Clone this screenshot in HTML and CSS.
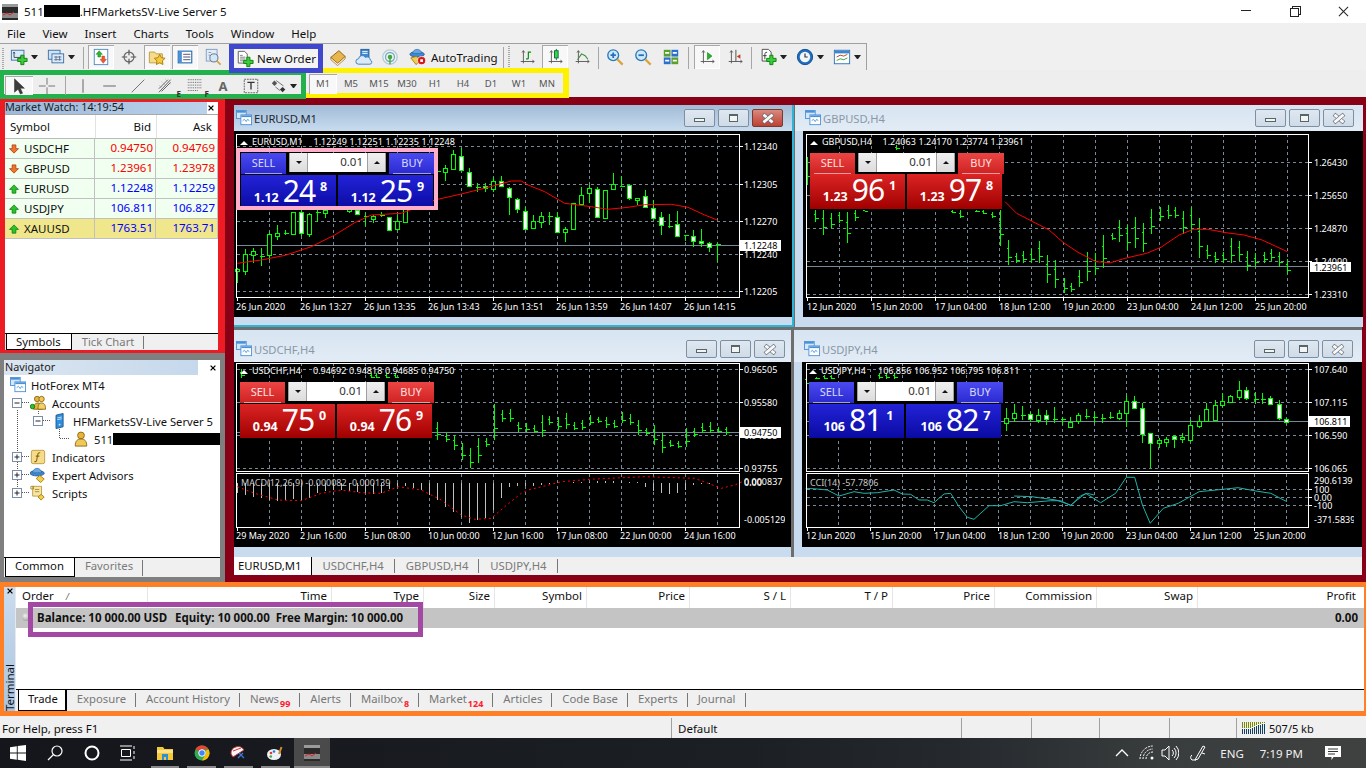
FILE: index.html
```html
<!DOCTYPE html>
<html lang="en">
<head>
<meta charset="utf-8">
<title>MetaTrader 4</title>
<link rel="stylesheet" href="styles.css">
</head>
<body>
<svg class="sprite" aria-hidden="true">
<defs>
<path id="plus" d="M12 8h3.500v3.500H19V15h-3.500v3.500H12V15H8.500v-3.500H12z" fill="#3ccb3c" stroke="#0b7f0b"/>
<path id="axes" d="M6 3v14M3 15h15M6 3L4.500 5M6 3l1.500 2M18 15l-2-1.500M18 15l-2 1.500" fill="none" stroke="#555"/>
</defs>
<symbol id="i-newchart" viewBox="0 0 20 20"><rect x="1.500" y="2.500" width="14" height="11" fill="#d8ebfb" stroke="#3a6ea5"/><path d="M4.500 4.500v6h8M4.500 4.500l-1 1.500M4.500 4.500l1 1.500M12.500 10.500l-1.500-1M12.500 10.500l-1.500 1" fill="none" stroke="#444"/><use href="#plus"/></symbol>
<symbol id="i-profiles" viewBox="0 0 20 20"><rect x="1.500" y="2.500" width="13" height="10" fill="#cfe3f7" stroke="#3a6ea5"/><rect x="5.500" y="6.500" width="13" height="10" fill="#dcebfa" stroke="#3a6ea5"/><path d="M8 10h8M8 13h8M10 9v5M14 9v5" fill="none" stroke="#5a6f8a"/></symbol>
<symbol id="i-mw" viewBox="0 0 20 20"><rect x="2.500" y="1.500" width="15" height="17" fill="#fff" stroke="#4a86c0"/><path d="M8 3l3.500 4H9.500v3h-3V7H4.500z" fill="#2db52d" stroke="#0a7a0a" stroke-width=".5"/><path d="M11 9h3v3.500h2L12.500 17 9 12.500h2z" fill="#ef5a28" stroke="#a33" stroke-width=".5"/></symbol>
<symbol id="i-cross" viewBox="0 0 20 20"><circle cx="10" cy="10" r="5.500" fill="none" stroke="#666" stroke-width="1.300"/><path d="M10 2v6M10 12v6M2 10h6M12 10h6" stroke="#555" stroke-width="1.300"/></symbol>
<symbol id="i-nav" viewBox="0 0 20 20"><path d="M1.500 4.500h6l1.500 2h7v10h-14.500z" fill="#f6dc8a" stroke="#b89b3a"/><path d="M13 7l1.900 3.800 4.100.6-3 2.900.7 4.100-3.700-2-3.700 2 .7-4.100-3-2.900 4.100-.6z" fill="#f6c93a" stroke="#a87a10"/></symbol>
<symbol id="i-term" viewBox="0 0 20 20"><rect x="2.500" y="3.500" width="15" height="13" fill="#fff" stroke="#2a6fb5" stroke-width="1.300"/><rect x="3" y="4" width="3.500" height="12" fill="#4a90d9"/><path d="M8 7h8M8 10h8M8 13h8" stroke="#446"/></symbol>
<symbol id="i-tester" viewBox="0 0 20 20"><rect x="2.500" y="1.500" width="12" height="13" fill="#e3ecf5" stroke="#7a9cc0"/><circle cx="11" cy="11" r="4.500" fill="#cfe8fa" stroke="#667"/><path d="M14.500 14.500l4 4" stroke="#d9a33a" stroke-width="2"/><path d="M5 5h3M5 8h2" stroke="#7a9cc0"/></symbol>
<symbol id="i-order" viewBox="0 0 20 20"><path d="M2.500 1.500h7l3 3v10h-10z" fill="#fff" stroke="#555"/><path d="M4.500 6h3M4.500 8h6M4.500 10h6M4.500 12h4" stroke="#777"/><use href="#plus"/></symbol>
<symbol id="i-book" viewBox="0 0 20 20"><path d="M2 10.500L11 3l7 6.500-8.500 7.500z" fill="#e8b64a" stroke="#8a5a10"/><path d="M2 10.500v2.500l7.500 6.500L18 12V9.500L9.500 17z" fill="#fbf0d0" stroke="#8a5a10" stroke-width=".7"/></symbol>
<symbol id="i-cloud" viewBox="0 0 20 20"><rect x="6.500" y="1.500" width="9" height="10" fill="#3f88d4" stroke="#225d99"/><path d="M8 4h6M8 6h6" stroke="#fff"/><path d="M4 18a3 3 0 0 1 0-6 4 4 0 0 1 7.500-1.500A3.500 3.500 0 0 1 17 13.500 2.300 2.300 0 0 1 16.500 18z" fill="#dbeaf8" stroke="#3a78b8"/></symbol>
<symbol id="i-signal" viewBox="0 0 20 20"><circle cx="10" cy="10" r="8" fill="#eef4f6" stroke="#b5cbd8" stroke-width="1.500"/><circle cx="10" cy="10" r="5" fill="none" stroke="#7fa8b8" stroke-width="1.500"/><circle cx="10" cy="10" r="2.500" fill="#3aa83a"/><path d="M10 10v8" stroke="#3aa83a" stroke-width="1.500"/></symbol>
<symbol id="i-auto" viewBox="0 0 20 20"><ellipse cx="9" cy="7" rx="8" ry="3" fill="#3f88d4" stroke="#225d99"/><path d="M4 6a5 4.500 0 0 1 10 0z" fill="#6aa7e0" stroke="#225d99" stroke-width=".6"/><path d="M2 11l6-1.500 5 3-5 6z" fill="#f2cf4a" stroke="#a87a10"/><circle cx="14" cy="14" r="4.500" fill="#d81818" stroke="#fff" stroke-width=".8"/><rect x="12.500" y="12.500" width="3" height="3" fill="#fff"/></symbol>
<symbol id="i-bar" viewBox="0 0 20 20"><use href="#axes"/><path d="M11.500 4v8M11.500 4.500h3M11.500 12H9" fill="none" stroke="#0a8a0a" stroke-width="1.300"/></symbol>
<symbol id="i-candle" viewBox="0 0 20 20"><use href="#axes"/><path d="M11.500 1v2M11.500 11v2.500" stroke="#064"/><rect x="9.500" y="3" width="4" height="8" fill="#3fd43f" stroke="#064"/></symbol>
<symbol id="i-line" viewBox="0 0 20 20"><use href="#axes"/><path d="M5 13l4.500-6.500 4 2 3 4" fill="none" stroke="#3a8a3a" stroke-width="1.200"/></symbol>
<symbol id="i-zoomin" viewBox="0 0 20 20"><circle cx="8" cy="8" r="6" fill="#cfe8fa" stroke="#2a7ab8" stroke-width="1.500"/><path d="M5 8h6M8 5v6" stroke="#2a6fb5" stroke-width="2"/><path d="M12.500 12.500l6 6" stroke="#d9a33a" stroke-width="2.500"/></symbol>
<symbol id="i-zoomout" viewBox="0 0 20 20"><circle cx="8" cy="8" r="6" fill="#cfe8fa" stroke="#2a7ab8" stroke-width="1.500"/><path d="M5 8h6" stroke="#2a6fb5" stroke-width="2"/><path d="M12.500 12.500l6 6" stroke="#d9a33a" stroke-width="2.500"/></symbol>
<symbol id="i-tile" viewBox="0 0 20 20"><rect x="2" y="2" width="7.500" height="7.500" fill="#5aa02c"/><rect x="10.500" y="2" width="7.500" height="7.500" fill="#2a6fd0"/><rect x="2" y="10.500" width="7.500" height="7.500" fill="#2a6fd0"/><rect x="10.500" y="10.500" width="7.500" height="7.500" fill="#5aa02c"/><path d="M3.500 5.500h4.500M12 5.500h4.500M3.500 14h4.500M12 14h4.500" stroke="#fff" stroke-width="2"/></symbol>
<symbol id="i-ascroll" viewBox="0 0 20 20"><use href="#axes"/><path d="M10.500 5l5 4-5 4z" fill="#2cb02c" stroke="#0a7a0a" stroke-width=".6"/></symbol>
<symbol id="i-shift" viewBox="0 0 20 20"><use href="#axes"/><path d="M11 2v13" stroke="#444"/><path d="M16 7l-4 2.500 4 2.500z" fill="#c83a1a"/></symbol>
<symbol id="i-ind" viewBox="0 0 20 20"><path d="M3.500 1.500h7l3 3v10h-10z" fill="#fff" stroke="#444"/><path d="M9 5c-2-1-2.500 1-2.500 2.500v5M4.500 8.500h4" fill="none" stroke="#333"/><use href="#plus"/></symbol>
<symbol id="i-clock" viewBox="0 0 20 20"><circle cx="10" cy="10" r="8.500" fill="#1f6fc0" stroke="#0d4a8c"/><circle cx="10" cy="10" r="5.800" fill="#f2f6fa"/><path d="M10 6v4h3" fill="none" stroke="#333" stroke-width="1.300"/></symbol>
<symbol id="i-tpl" viewBox="0 0 20 20"><rect x="1.500" y="2.500" width="17" height="15" fill="#fff" stroke="#2a6fb5"/><rect x="2" y="3" width="16" height="3" fill="#3a86d0"/><path d="M4 10l4-2 4 1 4-2" fill="none" stroke="#b0361a"/><path d="M4 14l4-2 4 1 4-2" fill="none" stroke="#2a9a2a"/></symbol>
<symbol id="i-cursor" viewBox="0 0 20 20"><path d="M5 2v15l4-3.500 2.500 5.500 2.500-1-2.500-5.500H16z" fill="#3c3c3c" stroke="#222" stroke-width=".5"/></symbol>
<symbol id="i-xhair" viewBox="0 0 20 20"><path d="M10 1v7.500M10 11.500V19M1 10h7.500M11.500 10H19" stroke="#666"/></symbol>
<symbol id="i-v" viewBox="0 0 20 20"><path d="M10 2.500v15" stroke="#555"/></symbol>
<symbol id="i-h" viewBox="0 0 20 20"><path d="M2.500 10h14" stroke="#555"/></symbol>
<symbol id="i-trend" viewBox="0 0 20 20"><path d="M3 17L17 3" stroke="#666"/></symbol>
<symbol id="i-chan" viewBox="0 0 20 20"><path d="M1 13L11 3M4 16L14 6M1 17L14 3" stroke="#555" fill="none"/><path d="M4 5l5 5M8 2l6 6M1 9l5 5" stroke="#888" stroke-width=".6" stroke-dasharray="1 1"/></symbol>
<symbol id="i-fibo" viewBox="0 0 20 20"><path d="M2 3h15M2 6h15M2 9h15M2 12h15M2 15h11" stroke="#555" stroke-dasharray="1 1"/></symbol>
<symbol id="i-tbox" viewBox="0 0 20 20"><rect x="2.500" y="2.500" width="15" height="15" fill="none" stroke="#555" stroke-dasharray="2 1"/><path d="M6 6h8M10 6v8" stroke="#333" stroke-width="1.500"/></symbol>
<symbol id="i-shapes" viewBox="0 0 20 20"><path d="M2 7l3-3 3 3-3 3z" fill="#555"/><path d="M11 14l3-3 3 3-3 3z" fill="#333"/><path d="M7 4l8 6M6 11l5 4" stroke="#666"/></symbol>
<symbol id="i-up" viewBox="0 0 16 16"><path d="M8 2.500l6 6h-3.500v5h-5v-5H2z" fill="#2cc02c" stroke="#0a7a0a"/></symbol>
<symbol id="i-down" viewBox="0 0 16 16"><path d="M5.500 2.500h5v5H14l-6 6-6-6h3.500z" fill="#f0742a" stroke="#a83a0a"/></symbol>
<symbol id="i-win" viewBox="0 0 18 18"><rect x=".5" y=".5" width="11" height="9" fill="#d5e6f7" stroke="#4a90d9"/><rect x="1" y="1" width="10" height="2" fill="#4a90d9"/><rect x="5.500" y="5.500" width="12" height="11" fill="#fff" stroke="#4a90d9"/><rect x="6" y="6" width="11" height="2" fill="#4a90d9"/><path d="M7.500 12l2-1.500 2 2.500 1.500-2.500 2 1.500" fill="none" stroke="#4a90d9"/></symbol>
<symbol id="i-accounts" viewBox="0 0 18 18"><circle cx="8" cy="4.500" r="3" fill="#e6b53c" stroke="#8a6410"/><circle cx="13" cy="4.500" r="3" fill="#f0c85a" stroke="#8a6410"/><path d="M4 16c0-5 2-7 5-7s5 2 5 7z" fill="#e6b53c" stroke="#8a6410"/><path d="M9 16c0-5 1-7 4-7s4.500 2 4.500 7z" fill="#f3cf6a" stroke="#8a6410"/><circle cx="2.800" cy="13" r="2.500" fill="#30c030" stroke="#0a7a0a"/></symbol>
<symbol id="i-server" viewBox="0 0 18 18"><path d="M4.500 2.500l8-2v15l-8 2z" fill="#2f8fdc" stroke="#17568c"/><path d="M6 5.500l5-1M6 7.500l5-1" stroke="#cfe8fa"/><circle cx="8.500" cy="13" r="1" fill="#cfe8fa"/></symbol>
<symbol id="i-user" viewBox="0 0 18 18"><circle cx="9" cy="5" r="3.800" fill="#e6b53c" stroke="#8a6410"/><path d="M2.500 17c0-6 2.500-8 6.500-8s6.500 2 6.500 8z" fill="#f0c85a" stroke="#8a6410"/></symbol>
<symbol id="i-func" viewBox="0 0 18 18"><rect x="1.500" y="1.500" width="15" height="15" rx="2" fill="#f6dc8a" stroke="#b89b3a"/><path d="M11.500 4.500c-2-.7-2.500.5-2.800 2l-1.200 6c-.3 1.500-1 2-2.500 1.500M6.500 8h4" fill="none" stroke="#8a6410" stroke-width="1.200"/></symbol>
<symbol id="i-ea" viewBox="0 0 18 18"><ellipse cx="8" cy="7" rx="8" ry="3" fill="#3f88d4" stroke="#225d99"/><path d="M3 6.500a5 5 0 0 1 10 0z" fill="#6aa7e0" stroke="#225d99" stroke-width=".6"/><path d="M7 13l4-3.500 5 4-4 4z" fill="#f2cf4a" stroke="#a87a10"/></symbol>
<symbol id="i-script" viewBox="0 0 18 18"><path d="M3 1.500h10v11H3z" fill="#f6e7a8" stroke="#b89b3a"/><path d="M1 1.500h3v3H1zM5.500 5h5M5.500 7.500h5" fill="none" stroke="#a88a2a"/><path d="M9 13.500l3.500-3 3.500 3-3.500 3.500z" fill="#f2cf4a" stroke="#a87a10"/></symbol>
<symbol id="i-exm" viewBox="0 0 10 10"><rect x=".5" y=".5" width="9" height="9" fill="#fff" stroke="#7a8ea8"/><path d="M2.500 5h5" stroke="#223"/></symbol>
<symbol id="i-exp" viewBox="0 0 10 10"><rect x=".5" y=".5" width="9" height="9" fill="#fff" stroke="#7a8ea8"/><path d="M2.500 5h5M5 2.500v5" stroke="#223"/></symbol>
<symbol id="i-tcross" viewBox="0 0 10 10"><path d="M2 2l6 6M8 2L2 8" stroke="#000" stroke-width="1.600"/></symbol>
<symbol id="i-winlogo" viewBox="0 0 16 16"><path d="M0 2.200l6.800-1v6.400H0zM7.700 1.100L16 0v7.600H7.700zM0 8.400h6.800v6.400l-6.800-1zM7.700 8.400H16V16l-8.300-1.200z" fill="#fff"/></symbol>
<symbol id="i-search" viewBox="0 0 16 16"><circle cx="10" cy="6" r="5" fill="none" stroke="#fff" stroke-width="1.200"/><path d="M6.500 9.500L1 15" stroke="#fff" stroke-width="1.300"/></symbol>
<symbol id="i-ring" viewBox="0 0 16 16"><circle cx="8" cy="8" r="6.500" fill="none" stroke="#fff" stroke-width="2"/></symbol>
<symbol id="i-tasks" viewBox="0 0 16 16"><path d="M0 1h12M0 15h12M1.500 4.500h9v7h-9zM14 1v3M14 6v3M14 11v3" fill="none" stroke="#fff"/></symbol>
<symbol id="i-explorer" viewBox="0 0 16 16"><path d="M0 2h6l1.500 2H16v11H0z" fill="#f6c93a"/><path d="M0 5h16v3H0z" fill="#fbe38a"/><path d="M5 9h6v6H9v-3H7v3H5z" fill="#2d8fd8"/></symbol>
<symbol id="i-chrome" viewBox="0 0 16 16"><circle cx="8" cy="8" r="7.500" fill="#34a853"/><path d="M8 .5a7.500 7.500 0 0 1 6.500 3.750H8a3.750 3.750 0 0 0-3.250 1.900L1.500 4A7.500 7.500 0 0 1 8 .5z" fill="#ea4335"/><path d="M14.500 4.250A7.500 7.500 0 0 1 8 15.500l3.250-5.600A3.750 3.750 0 0 0 11.300 6z" fill="#fbbc05"/><circle cx="8" cy="8" r="3.300" fill="#4285f4" stroke="#fff"/></symbol>
<symbol id="i-snip" viewBox="0 0 16 16"><path d="M1 9a7 7 0 0 1 13-4L3 12z" fill="#f7f7f7" stroke="#b33" stroke-width="1"/><path d="M3 6l8-3" stroke="#d33"/><path d="M9 8l5 5M13 8l-5 5" stroke="#3a78d8" stroke-width="1.300"/></symbol>
<symbol id="i-paint" viewBox="0 0 16 16"><ellipse cx="7" cy="9.500" rx="7" ry="5.500" fill="#eef3f8"/><circle cx="4" cy="8" r="1.300" fill="#e33"/><circle cx="7" cy="6.500" r="1.300" fill="#2a7ad8"/><circle cx="3.800" cy="11.500" r="1.300" fill="#3ab03a"/><path d="M12 9l2.500-7" stroke="#d88a2a" stroke-width="2"/></symbol>
<symbol id="i-mt4" viewBox="0 0 16 16"><rect width="16" height="16" fill="#2a2a2a"/><rect y="9" width="16" height="5" fill="#8a8a8a"/><path d="M0 0h16v3H0z" fill="#9a9a9a"/><path d="M1 11l4-2 3 2 4-3" fill="none" stroke="#d22"/></symbol>
<symbol id="i-wifi" viewBox="0 0 18 18"><path d="M1 15a13 13 0 0 1 13-13M4 15A10 10 0 0 1 14 5M7 15a7 7 0 0 1 7-7" fill="none" stroke="#fff" stroke-dasharray="2 1"/><circle cx="13" cy="14" r="1.500" fill="#fff"/></symbol>
<symbol id="i-speaker" viewBox="0 0 18 18"><path d="M1 6h3l4-4v14l-4-4H1z" fill="none" stroke="#fff"/><path d="M11 6a4 4 0 0 1 0 6M13 4a7 7 0 0 1 0 10M15 2a10 10 0 0 1 0 14" fill="none" stroke="#fff"/></symbol>
<symbol id="i-pen" viewBox="0 0 18 18"><path d="M7 14l7-12 2 1-7 12-3 1zM3 11a3 3 0 0 0 0 5h4M13 9l3 1" fill="none" stroke="#fff"/></symbol>
<symbol id="i-note" viewBox="0 0 18 18"><path d="M1 2h16v11H9.500L7.500 16v-3H1z" fill="#fff"/><path d="M4 5h10M4 7.500h10M4 10h7" stroke="#333"/></symbol>
<symbol id="i-caret" viewBox="0 0 14 14"><path d="M1 10l6-6 6 6" fill="none" stroke="#fff" stroke-width="1.300"/></symbol>
<symbol id="i-netbars" viewBox="0 0 24 14"><path d="M.5 7V1M2.500 7V1M4.500 7V1M6.500 7V1M8.500 7V1M10.500 6V1M12.500 5V1M14.500 4V1M16.500 3V1M18.500 3V1M20.500 2V1M22.500 2V1" stroke="#7a8a00"/><path d="M.5 13V8M2.500 13V8M4.500 13V8M6.500 13V8M8.500 13V8M10.500 13V7M12.500 13V6M14.500 13V5M16.500 13V4M18.500 13V4M20.500 13V3M22.500 13V3" stroke="#123f5c"/></symbol>
</svg>

<header class="titlebar">
  <svg class="app-icon"><use href="#i-mt4"/></svg>
  <span class="app-title">511<span class="redact"></span>.HFMarketsSV-Live Server 5</span>
  <div class="wincontrols">
    <span class="wc wc-min"></span><span class="wc wc-max"><i></i></span><span class="wc wc-close"></span>
  </div>
</header>

<nav class="menubar">
  <span>File</span><span>View</span><span>Insert</span><span>Charts</span><span>Tools</span><span>Window</span><span>Help</span>
</nav>

<div class="toolbar row1">
  <i class="grip"></i>
  <button class="tb drop"><svg class="ic"><use href="#i-newchart"/></svg><b class="arrow"></b></button>
  <button class="tb drop"><svg class="ic"><use href="#i-profiles"/></svg><b class="arrow"></b></button>
  <i class="sep sep-w9"></i>
  <button class="tb on"><svg class="ic"><use href="#i-mw"/></svg></button>
  <button class="tb m2"><svg class="ic"><use href="#i-cross"/></svg></button>
  <button class="tb on m2"><svg class="ic"><use href="#i-nav"/></svg></button>
  <button class="tb on m2"><svg class="ic"><use href="#i-term"/></svg></button>
  <button class="tb m2"><svg class="ic"><use href="#i-tester"/></svg></button>
  <div class="box-blue"><svg class="ic"><use href="#i-order"/></svg><span>New Order</span></div>
  <button class="tb m2"><svg class="ic"><use href="#i-book"/></svg></button>
  <button class="tb"><svg class="ic"><use href="#i-cloud"/></svg></button>
  <button class="tb"><svg class="ic"><use href="#i-signal"/></svg></button>
  <button class="tb auto"><svg class="ic"><use href="#i-auto"/></svg><span>AutoTrading</span></button>
  <i class="sep"></i><i class="grip grip-inner"></i>
  <button class="tb m2"><svg class="ic"><use href="#i-bar"/></svg></button>
  <button class="tb on m2"><svg class="ic"><use href="#i-candle"/></svg></button>
  <button class="tb m1"><svg class="ic"><use href="#i-line"/></svg></button>
  <i class="sep"></i>
  <button class="tb m1"><svg class="ic"><use href="#i-zoomin"/></svg></button>
  <button class="tb m2"><svg class="ic"><use href="#i-zoomout"/></svg></button>
  <button class="tb m2"><svg class="ic"><use href="#i-tile"/></svg></button>
  <i class="sep sep-m"></i>
  <button class="tb on m2"><svg class="ic"><use href="#i-ascroll"/></svg></button>
  <button class="tb m2"><svg class="ic"><use href="#i-shift"/></svg></button>
  <i class="sep"></i>
  <button class="tb drop"><svg class="ic"><use href="#i-ind"/></svg><b class="arrow"></b></button>
  <button class="tb drop"><svg class="ic"><use href="#i-clock"/></svg><b class="arrow"></b></button>
  <button class="tb drop"><svg class="ic"><use href="#i-tpl"/></svg><b class="arrow"></b></button>
</div>

<div class="toolbar row2">
  <div class="box-green">
    <button class="tb2 on"><svg class="ic"><use href="#i-cursor"/></svg></button>
    <button class="tb2"><svg class="ic"><use href="#i-xhair"/></svg></button>
    <i class="sep"></i>
    <button class="tb2 nar"><svg class="ic"><use href="#i-v"/></svg></button>
    <button class="tb2"><svg class="ic"><use href="#i-h"/></svg></button>
    <button class="tb2"><svg class="ic"><use href="#i-trend"/></svg></button>
    <button class="tb2 lett first-lett"><svg class="ic"><use href="#i-chan"/></svg><em>E</em></button>
    <button class="tb2 lett"><svg class="ic"><use href="#i-fibo"/></svg><em>F</em></button>
    <button class="tb2 big-a">A</button>
    <button class="tb2"><svg class="ic"><use href="#i-tbox"/></svg></button>
    <button class="tb2 wide"><svg class="ic"><use href="#i-shapes"/></svg><b class="arrow"></b></button>
  </div>
  <div class="box-yellow">
    <span class="on">M1</span><span>M5</span><span>M15</span><span>M30</span><span>H1</span><span>H4</span><span>D1</span><span>W1</span><span>MN</span>
  </div>
</div>

<main class="workspace">
  <div class="leftcol">
    <section class="box-red">
      <div class="dock-title mw-title"><span>Market Watch: 14:19:54</span><svg class="x"><use href="#i-tcross"/></svg></div>
      <div class="mw-head"><span class="sym">Symbol</span><span>Bid</span><span>Ask</span></div>
      <div class="mw-row"><span class="sym"><svg class="arr"><use href="#i-down"/></svg>USDCHF</span><span class="dn">0.94750</span><span class="dn">0.94769</span></div>
      <div class="mw-row"><span class="sym"><svg class="arr"><use href="#i-down"/></svg>GBPUSD</span><span class="dn">1.23961</span><span class="dn">1.23978</span></div>
      <div class="mw-row"><span class="sym"><svg class="arr"><use href="#i-up"/></svg>EURUSD</span><span class="up">1.12248</span><span class="up">1.12259</span></div>
      <div class="mw-row"><span class="sym"><svg class="arr"><use href="#i-up"/></svg>USDJPY</span><span class="up">106.811</span><span class="up">106.827</span></div>
      <div class="mw-row sel"><span class="sym"><svg class="arr"><use href="#i-up"/></svg>XAUUSD</span><span class="up">1763.51</span><span class="up">1763.71</span></div>
      <div class="dock-tabs"><span class="active">Symbols</span><span>Tick Chart</span></div>
    </section>
    <section class="box-gray">
      <div class="dock-title nav-title"><span>Navigator</span><svg class="x"><use href="#i-tcross"/></svg></div>
      <div class="tree">
        <svg class="tree-lines" viewBox="4 377 216 140"><path d="M17.500 412V490M22 404.500h8M22 458.500h8M22 476.500h8M22 494.500h8M38.500 413V417M43 422.500h8M59.500 431V440.500H70" fill="none" stroke="#555" stroke-dasharray="1 1"/></svg>
        <div class="node l0"><svg class="ni"><use href="#i-win"/></svg>HotForex MT4</div>
        <div class="node l1"><svg class="ex"><use href="#i-exm"/></svg><svg class="ni"><use href="#i-accounts"/></svg>Accounts</div>
        <div class="node l2"><svg class="ex"><use href="#i-exm"/></svg><svg class="ni"><use href="#i-server"/></svg>HFMarketsSV-Live Server 5</div>
        <div class="node l3"><svg class="ni"><use href="#i-user"/></svg>511<i class="redact2"></i></div>
        <div class="node l1"><svg class="ex"><use href="#i-exp"/></svg><svg class="ni"><use href="#i-func"/></svg>Indicators</div>
        <div class="node l1"><svg class="ex"><use href="#i-exp"/></svg><svg class="ni"><use href="#i-ea"/></svg>Expert Advisors</div>
        <div class="node l1"><svg class="ex"><use href="#i-exp"/></svg><svg class="ni"><use href="#i-script"/></svg>Scripts</div>
      </div>
      <div class="dock-tabs"><span class="active">Common</span><span>Favorites</span></div>
    </section>
  </div>

  <div class="mdi">
    <div class="mdi-client">
      <article class="win win-a active">
        <div class="wt"><svg class="wi"><use href="#i-win"/></svg><span>EURUSD,M1</span><div class="wb"><span class="b-min"></span><span class="b-max"></span><span class="b-close"></span></div></div>
        <div class="client">
          <svg id="c1" class="chart" width="551" height="186" viewBox="234 131 551 186">
            <g class="labels">
              <path class="tri" d="M240 145l4-4 4 4z"/>
              <text class="axis" x="252" y="145">EURUSD,M1</text><text class="axis" x="313.500" y="145">1.12249</text><text class="axis" x="349.500" y="145">1.12251</text><text class="axis" x="385.500" y="145">1.12235</text><text class="axis" x="421.500" y="145">1.12248</text>
              <text class="axis" x="744" y="150">1.12340</text><text class="axis" x="744" y="188">1.12305</text><text class="axis" x="744" y="225">1.12270</text><text class="axis" x="744" y="258">1.12240</text><text class="axis" x="744" y="295">1.12205</text>
              <rect class="pbox" x="740" y="240" width="41" height="11"/><text class="pbt" x="744" y="249">1.12248</text>
              <text class="axis" x="236" y="310">26 Jun 2020</text><text class="axis" x="300" y="310">26 Jun 13:27</text><text class="axis" x="364" y="310">26 Jun 13:35</text><text class="axis" x="428" y="310">26 Jun 13:43</text><text class="axis" x="492" y="310">26 Jun 13:51</text><text class="axis" x="556" y="310">26 Jun 13:59</text><text class="axis" x="620" y="310">26 Jun 14:07</text><text class="axis" x="684" y="310">26 Jun 14:15</text>
            </g>
          </svg>
          <div class="trade blue pos-a">
            <div class="t-top"><div class="t-btn">SELL</div><div class="spin"><span class="s-b"><i class="ad"></i></span><span class="s-v">0.01</span><span class="s-b"><i class="au"></i></span></div><div class="t-btn">BUY</div></div>
            <div class="t-prices"><div class="price"><small>1.12</small><strong>24</strong><sup>8</sup></div><div class="price"><small>1.12</small><strong>25</strong><sup>9</sup></div></div>
          </div>
          <div class="box-pink"></div>
        </div>
      </article>

      <article class="win win-b">
        <div class="wt"><svg class="wi"><use href="#i-win"/></svg><span>GBPUSD,H4</span><div class="wb"><span class="b-min"></span><span class="b-max"></span><span class="b-close"></span></div></div>
        <div class="client">
          <svg id="c2" class="chart" width="552" height="186" viewBox="803 131 552 186">
            <g class="labels">
              <path class="tri" d="M810 145l4-4 4 4z"/>
              <text class="axis" x="822" y="145">GBPUSD,H4</text><text class="axis" x="882.500" y="145">1.24063</text><text class="axis" x="918.500" y="145">1.24170</text><text class="axis" x="954.500" y="145">1.23774</text><text class="axis" x="990.500" y="145">1.23961</text>
              <text class="axis" x="1314" y="166">1.26430</text><text class="axis" x="1314" y="199">1.25650</text><text class="axis" x="1314" y="232">1.24870</text><text class="axis" x="1314" y="265">1.24090</text><text class="axis" x="1314" y="298">1.23310</text>
              <rect class="pbox" x="1310" y="262" width="41" height="10"/><text class="pbt" x="1314" y="270.500">1.23961</text>
              <text class="axis" x="807" y="310">12 Jun 2020</text><text class="axis" x="871" y="310">15 Jun 20:00</text><text class="axis" x="935" y="310">17 Jun 04:00</text><text class="axis" x="999" y="310">18 Jun 12:00</text><text class="axis" x="1063" y="310">19 Jun 20:00</text><text class="axis" x="1127" y="310">23 Jun 04:00</text><text class="axis" x="1191" y="310">24 Jun 12:00</text><text class="axis" x="1255" y="310">25 Jun 20:00</text>
            </g>
          </svg>
          <div class="trade red pos-b">
            <div class="t-top"><div class="t-btn">SELL</div><div class="spin"><span class="s-b"><i class="ad"></i></span><span class="s-v">0.01</span><span class="s-b"><i class="au"></i></span></div><div class="t-btn">BUY</div></div>
            <div class="t-prices"><div class="price"><small>1.23</small><strong>96</strong><sup>1</sup></div><div class="price"><small>1.23</small><strong>97</strong><sup>8</sup></div></div>
          </div>
        </div>
      </article>

      <article class="win win-c">
        <div class="wt"><svg class="wi"><use href="#i-win"/></svg><span>USDCHF,H4</span><div class="wb"><span class="b-min"></span><span class="b-max"></span><span class="b-close"></span></div></div>
        <div class="client">
          <svg id="c3" class="chart" width="551" height="185" viewBox="234 362 551 185">
            <g class="labels">
              <path class="tri" d="M240 374l4-4 4 4z"/>
              <text class="axis" x="252" y="374">USDCHF,H4</text><text class="axis" x="313" y="374">0.94692</text><text class="axis" x="349" y="374">0.94818</text><text class="axis" x="385" y="374">0.94685</text><text class="axis" x="421" y="374">0.94750</text>
              <text class="axis" x="744" y="373">0.96505</text><text class="axis" x="744" y="406">0.95580</text><text class="axis" x="744" y="439">0.94655</text><text class="axis" x="744" y="472">0.93755</text>
              <rect class="pbox" x="740" y="427" width="41" height="11"/><text class="pbt" x="744" y="436">0.94750</text>
              <text class="sublab" x="241" y="486">MACD(12,26,9) -0.000082 -0.000139</text>
              <text class="axis" x="744" y="485">0.000837</text><text class="axis" x="744" y="486">0.00</text><text class="axis" x="744" y="523">-0.005129</text>
              <text class="axis" x="236" y="539">29 May 2020</text><text class="axis" x="300" y="539">2 Jun 16:00</text><text class="axis" x="364" y="539">5 Jun 08:00</text><text class="axis" x="428" y="539">10 Jun 00:00</text><text class="axis" x="492" y="539">12 Jun 16:00</text><text class="axis" x="556" y="539">17 Jun 08:00</text><text class="axis" x="620" y="539">22 Jun 00:00</text><text class="axis" x="684" y="539">24 Jun 16:00</text>
            </g>
          </svg>
          <div class="trade red pos-c">
            <div class="t-top"><div class="t-btn">SELL</div><div class="spin"><span class="s-b"><i class="ad"></i></span><span class="s-v">0.01</span><span class="s-b"><i class="au"></i></span></div><div class="t-btn">BUY</div></div>
            <div class="t-prices"><div class="price"><small>0.94</small><strong>75</strong><sup>0</sup></div><div class="price"><small>0.94</small><strong>76</strong><sup>9</sup></div></div>
          </div>
        </div>
      </article>

      <article class="win win-d">
        <div class="wt"><svg class="wi"><use href="#i-win"/></svg><span>USDJPY,H4</span><div class="wb"><span class="b-min"></span><span class="b-max"></span><span class="b-close"></span></div></div>
        <div class="client">
          <svg id="c4" class="chart" width="552" height="185" viewBox="803 362 552 185">
            <g class="labels">
              <path class="tri" d="M810 374l4-4 4 4z"/>
              <text class="axis" x="822" y="374">USDJPY,H4</text><text class="axis" x="879" y="374">106.856</text><text class="axis" x="915" y="374">106.952</text><text class="axis" x="951" y="374">106.795</text><text class="axis" x="987" y="374">106.811</text>
              <text class="axis" x="1315" y="373">107.640</text><text class="axis" x="1315" y="406">107.115</text><text class="axis" x="1315" y="439">106.590</text><text class="axis" x="1315" y="472">106.065</text>
              <rect class="pbox" x="1310" y="416" width="41" height="11"/><text class="pbt" x="1315" y="425">106.811</text>
              <text class="sublab" x="811" y="486">CCI(14) -57.7806</text>
              <text class="axis" x="1315" y="484">290.6139</text><text class="axis" x="1315" y="493">100</text><text class="axis" x="1315" y="501">0.00</text><text class="axis" x="1315" y="509">-100</text><text class="axis" x="1315" y="523">-371.5839</text>
              <text class="axis" x="807" y="539">12 Jun 2020</text><text class="axis" x="871" y="539">15 Jun 20:00</text><text class="axis" x="935" y="539">17 Jun 04:00</text><text class="axis" x="999" y="539">18 Jun 12:00</text><text class="axis" x="1063" y="539">19 Jun 20:00</text><text class="axis" x="1127" y="539">23 Jun 04:00</text><text class="axis" x="1191" y="539">24 Jun 12:00</text><text class="axis" x="1255" y="539">25 Jun 20:00</text>
            </g>
          </svg>
          <div class="trade blue pos-d">
            <div class="t-top"><div class="t-btn">SELL</div><div class="spin"><span class="s-b"><i class="ad"></i></span><span class="s-v">0.01</span><span class="s-b"><i class="au"></i></span></div><div class="t-btn">BUY</div></div>
            <div class="t-prices"><div class="price"><small>106</small><strong>81</strong><sup>1</sup></div><div class="price"><small>106</small><strong>82</strong><sup>7</sup></div></div>
          </div>
        </div>
      </article>
    </div>
    <div class="mdi-tabs"><span class="active">EURUSD,M1</span><span>USDCHF,H4</span><span>GBPUSD,H4</span><span>USDJPY,H4</span></div>
  </div>
</main>

<section class="terminal">
  <aside class="term-strip"><svg class="x"><use href="#i-tcross"/></svg><span>Terminal</span></aside>
  <div class="term-main">
    <div class="t-head"><span class="first">Order <i>/</i></span><span>Time</span><span>Type</span><span>Size</span><span>Symbol</span><span>Price</span><span>S / L</span><span>T / P</span><span>Price</span><span>Commission</span><span>Swap</span><span>Profit</span></div>
    <div class="t-balance"><i class="dot"></i><span>Balance: 10 000.00 USD</span><span class="gap">Equity: 10 000.00</span><span class="gap gap2">Free Margin: 10 000.00</span><span class="profit">0.00</span></div>
    <div class="box-purple"></div>
    <div class="t-tabs">
      <span class="active">Trade</span><span>Exposure</span><span>Account History</span><span>News<sub>99</sub></span><span>Alerts</span><span>Mailbox<sub>8</sub></span><span>Market<sub>124</sub></span><span>Articles</span><span>Code Base</span><span>Experts</span><span>Journal</span>
    </div>
  </div>
</section>

<footer class="statusbar">
  <span class="st st-help">For Help, press F1</span>
  <span class="st st-def">Default</span>
  <span class="st st-a"></span><span class="st st-b"></span><span class="st st-c"></span><span class="st st-d"></span>
  <span class="st st-net"><svg class="netbars"><use href="#i-netbars"/></svg>507/5 kb</span>
</footer>

<div class="taskbar">
  <span class="tk"><svg class="tki"><use href="#i-winlogo"/></svg></span>
  <span class="tk"><svg class="tki"><use href="#i-search"/></svg></span>
  <span class="tk"><svg class="tki"><use href="#i-ring"/></svg></span>
  <span class="tk"><svg class="tki"><use href="#i-tasks"/></svg></span>
  <span class="tk run"><svg class="tki"><use href="#i-explorer"/></svg></span>
  <span class="tk run"><svg class="tki"><use href="#i-chrome"/></svg></span>
  <span class="tk run"><svg class="tki"><use href="#i-snip"/></svg></span>
  <span class="tk run"><svg class="tki"><use href="#i-paint"/></svg></span>
  <span class="tk run cur"><svg class="tki"><use href="#i-mt4"/></svg></span>
  <div class="tray">
    <svg class="tr-c"><use href="#i-caret"/></svg>
    <svg class="tr-i tr-wifi"><use href="#i-wifi"/></svg>
    <svg class="tr-i tr-sp"><use href="#i-speaker"/></svg>
    <svg class="tr-i tr-pen"><use href="#i-pen"/></svg>
    <span class="eng">ENG</span>
    <span class="clock">7:19 PM</span>
    <svg class="tr-n"><use href="#i-note"/></svg>
  </div>
</div>
<script src="chart.js"></script>
</body>
</html>
```

FILE: styles.css
```css
*, *::before, *::after { box-sizing: border-box; }
html, body { margin: 0; padding: 0; }
body {
  width: 1366px; height: 768px; overflow: hidden;
  display: flex; flex-direction: column;
  background: #f0f0f0; color: #111;
  font: 11px "Noto Sans", sans-serif;
}
.sprite { position: absolute; width: 0; height: 0; }
button { font: inherit; border: 0; padding: 0; background: none; color: inherit; }

.titlebar { height: 23px; background: #fff; display: flex; align-items: center; flex: none; }
.app-icon { width: 16px; height: 16px; margin: 0 6px 0 2px; }
.app-title { font-size: 11.500px; display: inline-flex; align-items: center; color: #111; }
.redact { display: inline-block; width: 36px; height: 12px; background: #000; margin-bottom: 1px; }
.wincontrols { margin-left: auto; display: flex; height: 23px; }
.wc { width: 46px; position: relative; display: block; margin-left: 2px; }
.wc-min::after { content: ""; position: absolute; left: 17px; top: 10px; width: 10px; height: 1px; background: #222; }
.wc-max::after { content: ""; position: absolute; left: 18px; top: 8px; width: 9px; height: 9px; border: 1px solid #222; background: #fff; }
.wc-max i { position: absolute; left: 20px; top: 6px; width: 9px; height: 9px; border: 1px solid #222; }
.wc-close::before, .wc-close::after { content: ""; position: absolute; left: 17px; top: 11px; width: 13px; height: 1px; background: #222; transform: rotate(45deg); }
.wc-close::after { transform: rotate(-45deg); }

.menubar { height: 20px; flex: none; display: flex; align-items: center; gap: 17px; padding-left: 7px; font-size: 11.500px; background: #f0f0f0; }

.toolbar { flex: none; height: 27px; display: flex; position: relative; background: #eeeeee; }
.row1 { width: 867px; border-top: 1px solid #a0a0a0; border-right: 1px solid #a0a0a0; align-items: flex-start; padding-top: 0; }
.row2 { width: 100%; }
.grip { display: block; width: 5px; height: 22px; margin-top: 4px; background: repeating-linear-gradient(180deg, #a8a8a8 0 1px, transparent 1px 2px) 2px 0 / 2px 100% no-repeat; flex: none; }
.grip-inner { width: 6px; margin-top: 2px; }
.sep { display: block; flex: none; width: 6px; height: 22px; margin-top: 3px; background: linear-gradient(#a6a6a6, #a6a6a6) center / 1px 100% no-repeat; }
.sep-w9 { width: 9px; }
.sep-m { width: 7px; margin-left: 1px; }
.tb { flex: none; width: 26px; height: 24px; margin-top: 1px; display: flex; align-items: center; justify-content: center; font-size: 11.500px; }
.tb.m1 { margin-left: 1px; }
.tb.m2 { margin-left: 2px; }
.tb.drop { width: 37px; gap: 3px; }
.tb.on, .tb2.on, .box-yellow .on { background: #f8f8f8; box-shadow: inset 1px 1px 0 #a8a8a8, inset -1px -1px 0 #fff; }
.ic { width: 18px; height: 18px; flex: none; }
.arrow { display: block; width: 7px; height: 4px; border: 3.500px solid transparent; border-top: 4px solid #222; border-bottom: 0; flex: none; }
.box-blue { flex: none; margin-left: 3px; margin-top: 0; width: 94px; height: 29px; border: 5px solid #3f48cc; background: #f4f4f4; position: relative; z-index: 4; display: flex; align-items: center; justify-content: center; gap: 3px; font-size: 11.500px; white-space: nowrap; }
.tb.auto { width: 97px; justify-content: flex-start; padding-left: 6px; gap: 4px; }

.box-green { width: 306px; height: 29px; flex: none; border: 5px solid #22b14c; border-left-width: 4px; padding-left: 1px; position: relative; z-index: 3; display: flex; align-items: flex-start; background: #eeeeee; }
.tb2 { flex: none; width: 28px; height: 19px; margin-top: 1px; display: flex; align-items: center; justify-content: center; position: relative; }
.box-green .sep { height: 19px; margin: 1px 1px 0; width: 6px; }
.tb2.nar { width: 27px; }
.tb2.first-lett { margin-left: 1px; }
.tb2.lett em { position: absolute; right: 0; bottom: -4px; font: normal bold 8px "Noto Sans", sans-serif; color: #333; }
.tb2.big-a { font: bold 13px "Noto Sans", sans-serif; color: #666; }
.tb2.wide { width: 36px; gap: 2px; }
.box-yellow { width: 263px; height: 30px; flex: none; margin-top: -2px; border: 5px solid #fff200; border-left: 0; border-right-width: 6px; position: relative; z-index: 2; display: flex; align-items: flex-start; padding-left: 3px; font-size: 9.500px; color: #555; background: #eeeeee; }
.box-yellow span { width: 28px; height: 20px; line-height: 20px; margin-top: 1px; text-align: center; flex: none; }

.workspace { flex: none; height: 485px; display: flex; }
.leftcol { width: 225px; flex: none; display: flex; flex-direction: column; }
.box-red { height: 256px; flex: none; border: solid #ed1c24; border-width: 5px 7px 3px 5px; background: #fff; display: flex; flex-direction: column; }
.box-gray { flex: 1; min-height: 0; border: solid #7f7f7f; border-width: 7px 5px 5px 4px; background: #fff; display: flex; flex-direction: column; }
.dock-title { height: 12px; flex: none; display: flex; align-items: center; justify-content: space-between; line-height: 12px; padding-right: 3px; color: #1a1a1a; font-size: 10.800px; }
.mw-title { background: linear-gradient(90deg, #9bb8da, #bcd2ea 95%, #fff 95%); }
.mw-title span { margin-top: -2px; }
.nav-title { height: 15px; background: linear-gradient(90deg, #dbe6f1, #c5d8ec 90%, #fff 90%); }
.nav-title span { margin-top: -1px; padding-left: 1px; }
.x { width: 8px; height: 8px; flex: none; }
.mw-head { height: 25px; flex: none; display: grid; grid-template-columns: 91px 61px 61px; align-items: center; font-size: 11.500px; border-top: 1px solid #a8a8a8; border-bottom: 1px solid #bbb; }
.mw-head span { text-align: right; padding-right: 5px; height: 100%; line-height: 23px; border-right: 1px solid #e2e2e2; }
.mw-head .sym { text-align: left; padding-left: 5px; }
.mw-row { height: 20px; flex: none; display: grid; grid-template-columns: 90px 61px 62px; background: #f0fff0; font-size: 11.500px; }
.mw-row span { text-align: right; padding-right: 2px; line-height: 18px; border-right: 1px solid #c0c0c0; border-bottom: 1px solid #c0c0c0; }
.mw-row .sym { text-align: left; padding-left: 3px; display: flex; align-items: center; gap: 4px; }
.mw-row .dn { color: #ff0000; }
.mw-row .up { color: #0000ff; }
.mw-row.sel { background: #f0e68c; }
.arr { width: 12px; height: 12px; flex: none; }
.dock-tabs { margin-top: auto; height: 17px; flex: none; border-top: 1px solid #000; background: #f0f0f0; display: flex; color: #7a7a7a; align-items: stretch; font-size: 11.300px; }
.box-gray .dock-tabs { height: 20px; }
.dock-tabs span { padding: 0 10px; line-height: 16px; position: relative; }
.dock-tabs span:not(.active)::after { content: ""; position: absolute; right: 0; top: 2px; bottom: 1px; width: 1px; background: #777; }
.dock-tabs .active { background: #fff; color: #111; margin-left: 1px; border: solid #000; border-width: 0 1px 1px 1px; padding: 0 10px 0 9px; }

.tree { position: relative; padding-top: 1px; flex: 1; font-size: 11.200px; }
.tree-lines { position: absolute; left: 0; top: 0; width: 216px; height: 140px; }
.node { height: 18px; display: flex; align-items: center; position: relative; white-space: nowrap; }
.ni { width: 16px; height: 16px; flex: none; }
.ex { width: 10px; height: 10px; flex: none; }
.l0 { padding-left: 6px; }
.l0 .ni { margin-right: 5px; }
.l1 { padding-left: 8px; }
.l1 .ex { margin-right: 8px; }
.l1 .ni { margin-right: 6px; }
.l2 { padding-left: 29px; }
.l2 .ex { margin-right: 9px; }
.l2 .ni { margin-right: 5px; }
.l3 { padding-left: 69px; }
.l3 .ni { margin-right: 5px; }
.redact2 { display: inline-block; width: 108px; height: 12px; background: #000; margin-left: 0; }

.mdi { flex: 1; min-width: 0; background: #880015; padding: 8px 4px 7px 9px; display: flex; flex-direction: column; }
.mdi-client { height: 452px; flex: none; background: #6e6e6e; position: relative; }
.win { position: absolute; display: flex; flex-direction: column; background: #c9dcef; }
.win-a { left: 0; top: 0; width: 560px; height: 222px; border-right: 2px solid #2fb4d6; border-bottom: 2px solid #2fb4d6; }
.win-b { left: 561px; top: 0; width: 568px; height: 222px; padding-left: 8px; }
.win-c { left: 0; top: 225px; width: 557px; height: 227px; }
.win-d { left: 560px; top: 225px; width: 568px; height: 227px; padding-left: 8px; }
.wt { flex: none; height: 26px; display: flex; align-items: center; font-size: 11.200px; color: #8a98a6; padding-left: 2px; background: linear-gradient(#d7e4f1, #e2ecf6); margin-left: 0; }
.win-b .wt, .win-d .wt { margin-left: -8px; padding-left: 10px; }
.win-c .wt, .win-d .wt { height: 32px; padding-top: 6px; }
.active .wt { color: #1c2733; background: linear-gradient(#a1bbd6, #c8dcef); }
.wi { width: 16px; height: 16px; margin-right: 2px; flex: none; }
.wb { margin-left: auto; display: flex; gap: 3px; padding-right: 9px; }
.win-c .wb { padding-right: 6px; }
.wb span { width: 31px; height: 18px; border: 1px solid #7f8fa0; border-radius: 2px; background: linear-gradient(#dfe8f1, #cfdbe8); position: relative; display: block; }
.b-min::after { content: ""; position: absolute; left: 9px; top: 8px; width: 11px; height: 4px; background: #f4f4f4; border: 1px solid #566; }
.b-max::after { content: ""; position: absolute; left: 10px; top: 4px; width: 9px; height: 8px; background: #f4f4f4; border: 1px solid #566; border-top-width: 2px; }
.b-close::before, .b-close::after { content: ""; position: absolute; left: 9px; top: 7px; width: 12px; height: 3px; background: #f8f8f8; box-shadow: 0 0 0 .5px #4a5560; transform: rotate(40deg); }
.b-close::after { transform: rotate(-40deg); }
.active .wb .b-close { background: linear-gradient(#d98a7f, #bf3f33); border-color: #7a3a30; }

.client { position: relative; flex: none; background: #000; }
.win-a .client, .win-b .client { height: 186px; }
.win-c .client, .win-d .client { height: 185px; }
.chart { display: block; }
.axis { font: 9px "Noto Sans", sans-serif; fill: #fff; }
.sublab { font: 9px "Noto Sans", sans-serif; fill: #c8c8c8; }
.pbt { font: 9px "Noto Sans", sans-serif; fill: #000; }
.pbox { fill: #fff; }
.tri { fill: #fff; }

.trade { position: absolute; width: 192px; height: 55.500px; background: #000; }
.pos-a { left: 7px; top: 22px; }
.pos-b { left: 7px; top: 21.500px; }
.pos-c { left: 6px; top: 20px; }
.pos-d { left: 7px; top: 20px; }
.t-top { height: 21px; display: grid; grid-template-columns: 45px 1fr 46px; }
.t-btn { font-size: 11px; text-align: center; line-height: 20px; position: relative; }
.t-btn::after { content: ""; position: absolute; left: 4px; right: 4px; bottom: 0; height: 1px; background: rgba(255,255,255,.55); }
.blue .t-btn { background: linear-gradient(#4a4af0, #2a2ad0); color: #d9dcff; }
.red .t-btn { background: linear-gradient(#ec4444, #cf2222); color: #ffe0e0; }
.spin { display: grid; grid-template-columns: 19px 59px 19px; margin: 0 3px; height: 19px; font-size: 11.500px; background: #fff; color: #333; }
.s-b { background: linear-gradient(#f0f0f0, #dcdcdc); border-right: 1px solid #a0a0a0; border-left: 1px solid #a0a0a0; display: flex; align-items: center; justify-content: center; }
.s-v { text-align: right; padding-right: 4px; line-height: 18px; }
.ad, .au { display: block; width: 6px; height: 3px; border: 3px solid transparent; }
.ad { border-top: 3px solid #111; border-bottom: 0; }
.au { border-bottom: 3px solid #111; border-top: 0; }
.t-prices { height: 34.500px; display: grid; grid-template-columns: 95px 95px; gap: 2px; margin-top: .500px; }
.price { display: flex; justify-content: center; align-items: baseline; color: #fff; line-height: 32px; position: relative; padding-left: 4px; }
.blue .price { background: linear-gradient(#2323d8, #0a0aa2); }
.red .price { background: linear-gradient(#dc2424, #a00000); }
.price small { font: bold 12.500px "Noto Sans", sans-serif; margin-right: 4px; }
.price strong { font: normal 30px/32px "Noto Sans", sans-serif; letter-spacing: -1px; }
.price sup { font: bold 12.500px/13px "Noto Sans", sans-serif; align-self: flex-start; margin: 5px 0 0 5px; }
.box-pink { position: absolute; left: 2px; top: 17px; width: 202px; height: 62px; border: 4.500px solid #ffaec9; pointer-events: none; }

.mdi-tabs { height: 18px; flex: none; display: flex; margin-top: 0; background: #f0f0f0; font-size: 11.300px; color: #7a7a7a; }
.mdi-tabs span { padding: 0 11px; line-height: 17px; position: relative; }
.mdi-tabs span:not(.active)::after { content: ""; position: absolute; right: 0; top: 2px; bottom: 2px; width: 1px; background: #777; }
.mdi-tabs .active { background: #fff; color: #111; padding: 0 9px 0 4px; border-right: 1px solid #000; }

.terminal { flex: none; height: 134px; border: solid #ff7f27; border-width: 5px 2px 5px 4px; display: flex; background: #fff; position: relative; }
.term-strip { width: 12px; flex: none; background: linear-gradient(#cbdcee, #a9c4e0); display: flex; flex-direction: column; justify-content: space-between; align-items: center; border-right: 1px solid #e8e8e8; }
.term-strip span { writing-mode: vertical-rl; transform: rotate(180deg); font-size: 11.500px; line-height: 11px; }
.term-main { flex: 1; min-width: 0; display: flex; flex-direction: column; position: relative; }
.t-head { height: 21px; flex: none; display: grid; grid-template-columns: 132px 184px 92px 71px 92px 103px 101px 102px 102px 102px 101px 1fr; font-size: 11.500px; line-height: 17px; }
.t-head span { text-align: right; padding-right: 4px; border-right: 1px solid #e6e6e6; }
.t-head span:last-child { border-right: 0; padding-right: 8px; }
.t-head .first { text-align: left; padding-left: 6px; }
.t-head i { font-size: 9px; margin-left: 9px; color: #666; }
.t-balance { height: 20px; flex: none; background: #c4c4c4; display: flex; align-items: center; font-weight: 700; font-size: 11.500px; padding: 0 0 2px 6px; white-space: nowrap; }
.t-balance .gap { margin-left: 8px; }
.t-balance .gap2 { margin-left: 6px; }
.t-balance .profit { margin-left: auto; padding-right: 6px; }
.dot { width: 8px; height: 8px; border-radius: 50%; background: radial-gradient(circle at 40% 35%, #f2f2f2, #8a8a8a); margin-right: 7px; flex: none; }
.box-purple { position: absolute; left: 12px; top: 15px; width: 395px; height: 35px; border: 5px solid #a349a4; pointer-events: none; }
.t-tabs { margin-top: auto; height: 22px; flex: none; background: #f0f0f0; border-top: 1px solid #000; display: flex; color: #777; font-size: 11.300px; }
.t-tabs span { padding: 0 10px; line-height: 18px; position: relative; white-space: nowrap; }
.t-tabs span:not(.active)::after { content: ""; position: absolute; right: 0; top: 3px; bottom: 4px; width: 1px; background: #777; }
.t-tabs .active { background: #fff; color: #111; margin-left: 2px; border: solid #000; border-width: 0 1px 1px 1px; border-right-width: 2px; padding: 0 7px 0 9px; }
.t-tabs sub { color: #ff1a2a; font-weight: 700; font-size: 9px; line-height: 0; margin-left: 1px; vertical-align: -4px; }

.statusbar { flex: none; height: 22px; background: #f0f0f0; display: flex; align-items: stretch; font-size: 11.500px; color: #111; }
.st { display: flex; align-items: center; padding-left: 2px; border-right: 1px solid #a0a0a0; margin: 2px 0 0; }
.st-help { width: 672px; }
.st-def { width: 290px; padding-left: 6px; }
.st-a { width: 70px; }
.st-b { width: 68px; }
.st-c { width: 70px; }
.st-d { width: 67px; }
.st-net { border: 0; padding-left: 5px; gap: 3px; font-size: 11px; }
.netbars { width: 24px; height: 14px; flex: none; }

.taskbar { flex: none; height: 30px; background: linear-gradient(90deg, #14161b 0, #1c1f24 55%, #25282d 70%, #3a3d3d 85%, #3f4141 100%); display: flex; align-items: stretch; color: #fff; }
.tk { width: 36.700px; flex: none; display: flex; align-items: center; justify-content: center; position: relative; }
.tki { width: 16px; height: 16px; }
.tk.run::after { content: ""; position: absolute; left: 4px; right: 4px; bottom: 0; height: 2px; background: #8a8a8a; }
.tk.cur { background: #4a4a4a; }
.tk.cur::after { left: 0; right: 0; }
.tray { margin-left: auto; display: flex; align-items: center; font-size: 11.500px; color: #f0f0f0; padding-right: 24px; }
.tr-c { width: 14px; height: 14px; margin-right: 10px; }
.tr-i { width: 18px; height: 18px; }
.tr-wifi { margin-right: 4px; }
.tr-sp { margin-right: 10px; }
.tr-pen { margin-right: 13px; }
.clock { margin-left: 16px; }
.tr-n { width: 18px; height: 18px; margin-left: 21px; }
```

FILE: chart.js
```js
(function () {
  var NS = 'http://www.w3.org/2000/svg';
  var GRID = '#778899', G = '#00ff00';
  function mk(svg, tag, a) {
    var n = document.createElementNS(NS, tag);
    for (var k in a) n.setAttribute(k, a[k]);
    svg.insertBefore(n, svg.querySelector('.labels'));
    return n;
  }
  var r = function (v) { return Math.round(v) + 0.5; };
  function line(svg, x1, y1, x2, y2, col, dash) {
    var a = { x1: x1, y1: y1, x2: x2, y2: y2, stroke: col, 'shape-rendering': 'crispEdges' };
    if (dash) a['stroke-dasharray'] = dash;
    mk(svg, 'line', a);
  }
  function pane(svg, x0, x1, y0, y1, hs, vs) {
    hs.forEach(function (y) { line(svg, x0, r(y), x1, r(y), GRID, '3 3'); line(svg, x1, r(y), x1 + 4, r(y), '#fff'); });
    vs.forEach(function (x) { line(svg, r(x), y0, r(x), y1, GRID, '3 3'); });
  }
  function frame(svg, x0, x1, y0, y1) {
    mk(svg, 'rect', { x: x0 + .5, y: y0 + .5, width: x1 - x0, height: y1 - y0, fill: 'none', stroke: '#fff', 'shape-rendering': 'crispEdges' });
  }
  function ticks(svg, vs, y) {
    vs.forEach(function (x) { line(svg, r(x), y, r(x), y + 4, '#fff'); });
  }
  function candles(svg, ox, sx, oy, list) {
    list.forEach(function (c) {
      var x = r(ox + c[0] / sx), hi = oy + c[1] / 3, lo = oy + c[2] / 3, t = oy + c[3] / 3, b = oy + (c[4] === undefined ? c[3] : c[4]) / 3;
      line(svg, x, Math.round(hi), x, Math.round(lo), G);
      if (c[5] === 'd') { line(svg, x - 2, r(t), x + 3, r(t), G); return; }
      mk(svg, 'rect', { x: x - 2, y: r(t), width: 4, height: Math.max(2, Math.round(b - t)), fill: c[5] === 'w' ? '#fff' : '#000', stroke: G, 'shape-rendering': 'crispEdges' });
    });
  }
  function bars(svg, ox, sx, oy, list) {
    list.forEach(function (c) {
      var x = r(ox + c[0] / sx), hi = oy + c[1] / 3, lo = oy + c[2] / 3, o = hi + (lo - hi) * 0.32, cl = hi + (lo - hi) * 0.68;
      line(svg, x, Math.round(hi), x, Math.round(lo), G);
      line(svg, x - 2, r(o), x, r(o), G);
      line(svg, x, r(cl), x + 3, r(cl), G);
    });
  }
  function poly(svg, ox, sx, oy, pts, col, dash) {
    var d = pts.map(function (p) { return (ox + p[0] / sx).toFixed(1) + ',' + (oy + p[1] / 3).toFixed(1); }).join(' ');
    var a = { points: d, fill: 'none', stroke: col };
    if (dash) a['stroke-dasharray'] = dash;
    mk(svg, 'polyline', a);
  }
  function seq(a, step, n) { var o = []; for (var i = 0; i < n; i++) o.push(a + step * i); return o; }

  /* EURUSD M1 */
  var s = document.getElementById('c1');
  var v1 = seq(269, 32, 15);
  pane(s, 237, 739, 134, 297, [146, 184, 221, 254, 291], v1);
  line(s, 237, 245.5, 739, 245.5, GRID);
  candles(s, 228, 3, 100, [
    [28,505,550,508,514],[52,448,525,462,512],[76,445,490,454,466],[100,445,498,467,467,'d'],[124,395,480,403,467],[148,375,420,398,406],[172,390,404,398,398,'d'],[196,335,404,337,403],[220,330,408,335,397,'w'],[244,340,410,343,403],[268,330,365,335,335,'d'],[292,325,355,330,340],[364,322,340,322,335],[388,325,345,330,343,'w'],[412,340,378,348,348,'d'],[436,345,368,347,355],[460,335,352,345,345,'d'],[484,350,394,352,390,'w'],[508,345,392,362,385],[532,326,365,326,365],
    [628,205,220,212,212,'d'],[652,195,242,205,216],[676,150,210,163,207],[700,145,212,167,210,'w'],[724,205,262,215,258,'w'],[748,250,275,262,262,'d'],[772,250,275,259,265,'w'],[796,230,275,244,268],[820,228,260,242,258,'w'],[844,262,346,264,291,'w'],[868,295,340,296,325,'w'],[892,320,385,332,385,'w']
  ]);
  candles(s, 528, 3, 100, [
    [16,345,385,362,382],[40,335,385,347,364],[64,335,375,349,349,'d'],[88,335,400,352,397,'w'],[112,380,425,388,397],[136,310,390,310,388],[160,262,318,286,313],[184,255,310,265,281],[208,260,352,268,352,'w'],[232,270,355,271,355],[256,220,270,253,268],[280,228,262,257,257,'d'],[304,255,300,256,296,'w'],[328,293,315,293,300],[352,270,322,287,320,'w'],[376,300,355,323,352,'w'],[400,337,405,350,373,'w'],[424,342,385,378,378,'d'],[448,333,410,373,408,'w'],[472,405,422,406,406,'d'],[496,390,440,408,422,'w'],[520,388,440,424,430,'w'],[544,425,455,428,440,'w'],[568,428,487,432,432,'d']
  ]);
  poly(s, 228, 3, 100, [[28,490],[100,480],[172,466],[250,440],[320,405],[380,368],[430,345],[520,340],[560,325],[620,300],[700,282],[780,262],[850,243],[880,243],[900,255],[950,275],[1010,310],[1090,320],[1140,328],[1200,322],[1250,314],[1330,313],[1380,322],[1430,345],[1468,360]], '#ff0000');
  frame(s, 236, 739, 134, 297);
  ticks(s, [237].concat(seq(301, 64, 7)), 297);

  /* GBPUSD H4 */
  s = document.getElementById('c2');
  var v2 = seq(839, 32, 15);
  pane(s, 807, 1308, 134, 297, [162, 195, 228, 261, 294], v2);
  line(s, 807, 266.5, 1308, 266.5, GRID);
  bars(s, 800, 2.77, 100, [
    [20,170,255],[42,330,365],[64,330,405],[86,340,385],[108,335,370],[131,335,430],[153,330,362],[176,330,333],[265,135,150],[420,330,340],[442,330,355],[487,330,335],[508,330,342],[531,335,355],[553,330,438],
    [575,420,495],[597,458,490],[619,452,490],[641,447,490],[663,423,488],[685,465,548],[707,480,565],[730,535,578],[752,550,575],[774,510,562],[796,455,542],[818,460,525],[840,406,505],[863,398,420],[885,360,425],[907,375,450],[929,352,443],[951,370,455],[973,327,403],[996,322,362],[1018,316,358],[1040,320,355],[1062,333,402],[1084,320,398],[1106,355,475],[1128,435,478],[1150,457,488],[1172,455,488],[1195,415,490],[1217,423,482],[1239,453,513],[1261,460,500],[1284,455,488],[1306,447,482],[1328,455,500],[1350,478,523]
  ]);
  poly(s, 800, 2.77, 100, [[568,305],[600,340],[640,362],[690,390],[730,428],[770,457],[820,485],[860,488],[900,475],[960,460],[1000,442],[1050,405],[1090,388],[1130,388],[1180,398],[1230,405],[1280,420],[1350,455]], '#ff0000');
  frame(s, 806, 1308, 134, 297);
  ticks(s, [807].concat(seq(871, 64, 7)), 297);

  /* USDCHF H4 */
  s = document.getElementById('c3');
  pane(s, 237, 739, 363, 471, [369, 402, 435, 468], v1);
  pane(s, 237, 739, 474, 527, [], v1);
  line(s, 237, 432.5, 739, 432.5, GRID);
  bars(s, 228, 3, 330, [[40,118,145],[430,130,145],[445,130,145],[475,130,145],[500,130,145]]);
  bars(s, 430, 1.675, 335, [
    [12,260,315],[26,295,320],[40,300,345],[53,325,375],[67,340,400],[80,310,385],[93,310,335],[107,207,315],[120,225,260],[134,222,262],[147,260,290],[160,265,292],[174,270,295],[187,240,305],[200,242,270],[214,247,285],[227,235,282],[241,262,285],[254,255,285],[268,240,270],[281,245,265],[295,245,278],[308,255,280],[321,232,265],[335,238,270],[348,255,300],[362,280,300],[375,270,330],[388,295,355],[402,315,335],[415,318,340],[428,280,335],[442,280,305],[455,265,295],[469,262,295],[482,275,295],[495,275,300]
  ]);
  var zero = 482.5;
  [490,495,500,505,510,512,510,508,510,505,490,482,480,480,482,485,490,492,490,478,470,468,475,480,495,510,530,545,560,578,570,565,540,505].forEach(function (z, k) {
    line(s, 237.5 + 8 * k, zero, 237.5 + 8 * k, 330 + z / 3, '#c0c0c0');
  });
  [455,452,452,452,450,447,445,445,442,440,440,438,438,438,438,440,442,455,468,475,478,475,465,450,448,446,445,444].forEach(function (z, i) {
    var x = 237.5 + 8 * (34 + i);
    line(s, x, zero, x, 335 + z / 3, '#c0c0c0');
  });
  poly(s, 228, 3, 330, [[28,470],[80,490],[150,510],[220,512],[280,490],[340,480],[400,488],[460,490],[510,470],[580,480],[640,510],[700,555],[740,568],[790,565],[830,530],[880,490],[900,480],[950,468],[1000,455],[1100,447],[1250,440],[1400,445],[1480,475],[1520,465],[1560,448]], '#ff0000', '2 3');
  frame(s, 236, 739, 363, 471);
  frame(s, 236, 739, 473, 527);
  ticks(s, [237].concat(seq(301, 64, 7)), 527);

  /* USDJPY H4 */
  s = document.getElementById('c4');
  pane(s, 808, 1309, 363, 471, [369, 402, 435, 468], v2);
  pane(s, 808, 1309, 474, 527, [489, 497, 505], v2);
  line(s, 808, 421.5, 1309, 421.5, GRID);
  bars(s, 795, 3, 330, [[37,135,170],[66,140,148],[90,135,147],[110,135,147],[255,130,147],[275,130,147],[300,130,147]]);
  candles(s, 795, 3, 330, [
    [613,210,280,232,277,'w'],[637,235,303,263,277],[661,222,275,248,262],[685,228,270,256,256,'d'],[709,245,275,253,268,'w'],[733,238,280,254,268],[757,240,285,254,265,'w'],[781,232,280,267,267,'d'],[805,260,285,268,268,'d'],[829,260,290,275,290],[853,250,282,256,273],[877,238,268,258,258,'d'],[901,245,280,262,262,'d']
  ]);
  candles(s, 430, 1.675, 335, [
    [1128,236,265,250,250,'d'],[1141,230,252,245,245,'d'],[1155,225,255,235,250],[1168,180,275,198,235],[1181,183,220,198,218,'w'],[1195,205,325,218,297,'w'],[1208,295,400,295,325,'w'],[1222,310,340,315,325],[1235,305,335,312,322],[1248,300,340,303,312,'w'],[1262,295,325,307,314],[1275,255,320,270,315],[1289,240,280,257,272],[1302,205,260,222,257],[1316,195,258,210,255],[1329,175,215,198,210],[1342,180,205,183,200],[1356,138,195,165,185],[1369,155,195,165,190,'w'],[1383,170,208,192,192,'d'],[1396,175,208,192,192,'d'],[1409,183,210,190,208,'w'],[1423,195,255,208,250,'w'],[1436,250,262,252,260,'w']
  ]);
  poly(s, 795, 3, 330, [[35,475],[70,477],[100,480],[135,498],[180,485],[210,490],[250,488],[300,480],[325,492],[350,493],[375,510],[400,510],[420,518],[450,492],[470,490],[495,530],[520,562],[540,568],[585,527],[620,527],[660,515],[700,518],[770,512],[800,512],[830,527],[860,497],[880,490],[900,495]], '#20b2aa');
  poly(s, 430, 1.675, 335, [[980,483],[1010,485],[1050,495],[1075,510],[1100,475],[1125,503],[1150,475],[1168,427],[1182,427],[1195,510],[1208,565],[1230,520],[1255,505],[1290,470],[1330,463],[1355,458],[1385,468],[1410,475],[1437,500]], '#20b2aa');
  frame(s, 807, 1309, 363, 471);
  frame(s, 807, 1309, 473, 527);
  ticks(s, [808].concat(seq(871, 64, 7)), 527);
})();
```
